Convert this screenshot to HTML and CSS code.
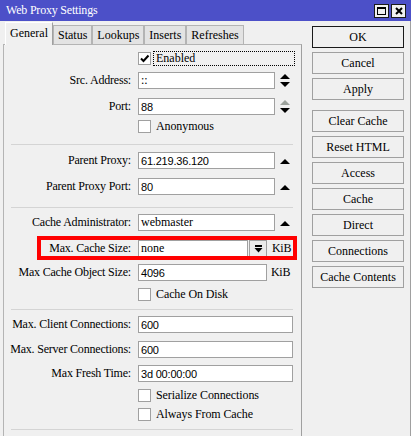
FILE: index.html
```html
<!DOCTYPE html>
<html>
<head>
<meta charset="utf-8">
<link rel="stylesheet" href="styles.css">
</head>
<body>
<div class="window">
  <div class="titlebar">
    <span class="title">Web Proxy Settings</span>
    <div class="tbtns">
      <span class="tbtn"><svg width="9" height="8" viewBox="0 0 9 8"><rect x="0.5" y="0.5" width="8" height="7" fill="none" stroke="#000"/><rect x="0" y="0" width="9" height="2" fill="#000"/></svg></span>
      <span class="tbtn"><svg width="8" height="8" viewBox="0 0 8 8"><path d="M1 1 L7 7 M7 1 L1 7" stroke="#000" stroke-width="2"/></svg></span>
    </div>
  </div>
  <div class="main">
    <div class="left">
      <div class="tabs">
        <span class="tab active">General</span>
        <span class="tab">Status</span>
        <span class="tab">Lookups</span>
        <span class="tab">Inserts</span>
        <span class="tab">Refreshes</span>
      </div>
      <div class="panel">
        <div class="form">
          <div class="check-row">
            <span class="box"><svg width="11" height="11" viewBox="0 0 11 11"><path d="M2 5.5 L4.5 8 L9.5 2.5" fill="none" stroke="#000" stroke-width="2"/></svg></span>
            <span class="focus">Enabled</span>
          </div>
          <div class="row mt7">
            <span class="lbl">Src. Address:</span>
            <span class="inp w137">::</span>
            <svg class="spin" width="10" height="13" viewBox="0 0 10 13"><polygon points="0,5 5,0 10,5" fill="#000"/><polygon points="0,8 10,8 5,13" fill="#000"/></svg>
          </div>
          <div class="row mt9">
            <span class="lbl">Port:</span>
            <span class="inp w137 sans">88</span>
            <svg class="spin" width="10" height="13" viewBox="0 0 10 13"><polygon points="0,5 5,0 10,5" fill="#9ca29c"/><polygon points="0,8 10,8 5,13" fill="#000"/></svg>
          </div>
          <div class="check-row mt5">
            <span class="box"></span>
            <span class="clbl">Anonymous</span>
          </div>
          <div class="sep mt11"></div>
          <div class="row mt7">
            <span class="lbl">Parent Proxy:</span>
            <span class="inp w137 sans">61.219.36.120</span>
            <svg class="spin up" width="10" height="5" viewBox="0 0 10 5"><polygon points="0,5 5,0 10,5" fill="#000"/></svg>
          </div>
          <div class="row mt9">
            <span class="lbl">Parent Proxy Port:</span>
            <span class="inp w137 sans">80</span>
            <svg class="spin up" width="10" height="5" viewBox="0 0 10 5"><polygon points="0,5 5,0 10,5" fill="#000"/></svg>
          </div>
          <div class="sep mt12"></div>
          <div class="row mt6">
            <span class="lbl">Cache Administrator:</span>
            <span class="inp w137">webmaster</span>
            <svg class="spin up" width="10" height="5" viewBox="0 0 10 5"><polygon points="0,5 5,0 10,5" fill="#000"/></svg>
          </div>
          <div class="row mt9">
            <span class="lbl">Max. Cache Size:</span>
            <span class="inp w110">none</span>
            <span class="dd"><svg width="9" height="8" viewBox="0 0 9 8"><rect x="1" y="0" width="7" height="2" fill="#000"/><polygon points="0.5,3 8.5,3 4.5,7.5" fill="#000"/></svg></span>
            <span class="unit">KiB</span>
            <span class="highlight"></span>
          </div>
          <div class="row mt7">
            <span class="lbl">Max Cache Object Size:</span>
            <span class="inp w129 sans">4096</span>
            <span class="unit u2">KiB</span>
          </div>
          <div class="check-row mt7">
            <span class="box"></span>
            <span class="clbl">Cache On Disk</span>
          </div>
          <div class="sep mt8"></div>
          <div class="row mt6">
            <span class="lbl">Max. Client Connections:</span>
            <span class="inp w155 sans">600</span>
          </div>
          <div class="row mt8">
            <span class="lbl">Max. Server Connections:</span>
            <span class="inp w155 sans">600</span>
          </div>
          <div class="row mt7">
            <span class="lbl">Max Fresh Time:</span>
            <span class="inp w155 sans">3d 00:00:00</span>
          </div>
          <div class="check-row mt7">
            <span class="box"></span>
            <span class="clbl">Serialize Connections</span>
          </div>
          <div class="check-row mt6">
            <span class="box"></span>
            <span class="clbl">Always From Cache</span>
          </div>
          <div class="sep mt8"></div>
        </div>
      </div>
    </div>
    <div class="buttons">
      <div class="group">
        <span class="btn default">OK</span>
        <span class="btn">Cancel</span>
        <span class="btn">Apply</span>
      </div>
      <div class="group">
        <span class="btn">Clear Cache</span>
        <span class="btn">Reset HTML</span>
        <span class="btn">Access</span>
        <span class="btn">Cache</span>
        <span class="btn">Direct</span>
        <span class="btn">Connections</span>
        <span class="btn">Cache Contents</span>
      </div>
    </div>
  </div>
</div>
</body>
</html>
```

FILE: styles.css
```css
* { box-sizing: border-box; }
html, body { margin: 0; padding: 0; }
body {
  width: 411px;
  height: 436px;
  overflow: hidden;
  background: #f0f0f0;
  font-family: "Liberation Serif", "Times New Roman", serif;
  font-size: 12px;
  color: #000;
}
.window {
  width: 411px;
  height: 436px;
  display: flex;
  flex-direction: column;
  background: #f0f0f0;
}
.titlebar {
  height: 21px;
  flex: none;
  background: #4c50c8;
  display: flex;
  align-items: center;
  justify-content: space-between;
  padding: 0 5px 0 6px;
}
.title { color: #fff; font-size: 12px; letter-spacing: -0.2px; }
.tbtns { display: flex; gap: 2px; }
.tbtn {
  width: 15px;
  height: 14px;
  background: #f0f0f0;
  border: 1px solid #1a1a1a;
  display: flex;
  align-items: center;
  justify-content: center;
}
.main {
  flex: 1;
  display: flex;
  padding-left: 3px;
  border-right: 1px solid #a0a0a0;
  min-height: 0;
}
.left {
  width: 299px;
  display: flex;
  flex-direction: column;
}
.tabs {
  height: 23px;
  margin-top: 1px;
  margin-bottom: -1px;
  padding-left: 2px;
  display: flex;
  align-items: flex-end;
  position: relative;
  z-index: 1;
}
.tab {
  height: 19px;
  margin-bottom: 1px;
  padding: 0 4px;
  background: #e3e3e3;
  border: 1px solid #b4b4b4;
  border-bottom: none;
  display: flex;
  align-items: center;
  white-space: nowrap;
}
.tab.active {
  height: 23px;
  margin-bottom: 0;
  padding: 0 4px 2px 4px;
  background: #f0f0f0;
  border-color: #ffffff #a0a0a0 #f0f0f0 #ffffff;
}
.panel {
  flex: 1;
  border-top: 1px solid #b4b4b4;
  border-left: 1px solid #b4b4b4;
  border-right: 1px solid #a0a0a0;
  padding-top: 7px;
}
.form { display: flex; flex-direction: column; }
.row {
  height: 17px;
  display: flex;
  align-items: center;
  position: relative;
}
.lbl {
  width: 127px;
  margin-right: 7px;
  text-align: right;
  white-space: nowrap;
  letter-spacing: -0.2px;
}
.inp {
  height: 17px;
  border: 1px solid #a0a0a0;
  background: #fff;
  padding: 0 2px;
  display: flex;
  align-items: center;
  white-space: nowrap;
  overflow: hidden;
}
.sans { font-family: "Liberation Sans", Arial, sans-serif; font-size: 11px; letter-spacing: -0.2px; }
.w137 { width: 137px; }
.w110 { width: 110px; }
.w129 { width: 129px; }
.w155 { width: 155px; }
.spin { margin-left: 5px; }
.spin.up { margin-top: 1px; }
.dd {
  width: 18px;
  height: 17px;
  margin-left: 1px;
  border: 1px solid #a0a0a0;
  background: #ebebeb;
  display: flex;
  align-items: center;
  justify-content: center;
}
.unit { margin-left: 5px; letter-spacing: -0.3px; }
.unit.u2 { margin-left: 4px; }
.highlight {
  position: absolute;
  left: 33px;
  top: -4px;
  width: 260px;
  height: 24px;
  border: 4px solid #ff0000;
  pointer-events: none;
}
.check-row {
  height: 13px;
  display: flex;
  align-items: center;
  padding-left: 134px;
}
.box {
  width: 13px;
  height: 13px;
  flex: none;
  background: #fff;
  border: 1px solid #a0a0a0;
  display: flex;
  align-items: center;
  justify-content: center;
}
.clbl { margin-left: 5px; white-space: nowrap; letter-spacing: -0.1px; }
.focus {
  margin-left: 2px;
  width: 142px;
  height: 15px;
  border: 1px dotted #000;
  padding-left: 2px;
  display: flex;
  align-items: center;
}
.sep {
  height: 1px;
  width: 282px;
  margin-left: 7px;
  background: #d4d4d4;
}
.mt5 { margin-top: 5px; }
.mt6 { margin-top: 6px; }
.mt7 { margin-top: 7px; }
.mt8 { margin-top: 8px; }
.mt9 { margin-top: 9px; }
.mt11 { margin-top: 11px; }
.mt12 { margin-top: 12px; }
.buttons {
  width: 92px;
  margin-left: 10px;
  padding-top: 5px;
  display: flex;
  flex-direction: column;
  gap: 10px;
}
.group { display: flex; flex-direction: column; gap: 4px; }
.btn {
  height: 22px;
  border: 1px solid #a0a0a0;
  background: #f0f0f0;
  display: flex;
  align-items: center;
  justify-content: center;
  white-space: nowrap;
}
.btn.default { border-color: #1a1a1a; }
```
